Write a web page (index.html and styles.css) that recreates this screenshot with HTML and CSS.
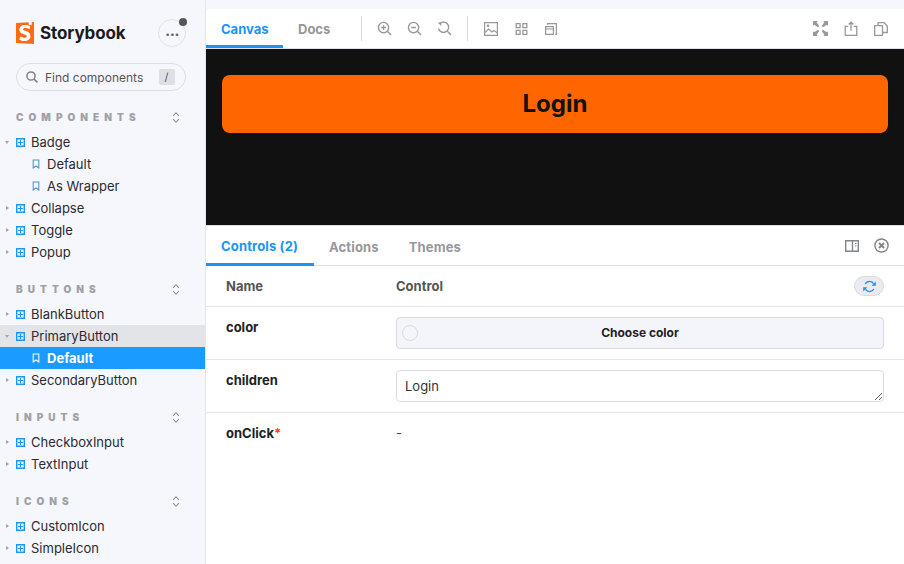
FILE: index.html
```html
<!DOCTYPE html>
<html lang="en">
<head>
  <meta charset="UTF-8">
  <title>Storybook</title>
  <link rel="stylesheet" href="styles.css">
</head>
<body>
  <svg class="sprites" width="0" height="0">
    <symbol id="component" viewBox="0 0 9 9">
      <path d="M.7.7h7.600v7.600H.7z" fill="none" stroke="currentColor" stroke-width="1.400"/>
      <path d="M4.500 2v5M2 4.500h5" fill="none" stroke="currentColor" stroke-width="1.200"/>
    </symbol>
    <symbol id="bookmark" viewBox="0 0 10 12">
      <path d="M1.500 1h7v10L5 8.500 1.500 11z" fill="none" stroke="currentColor" stroke-width="1.300"/>
    </symbol>
    <symbol id="updown" viewBox="0 0 10 16">
      <path d="M1.500 6 5 2l3.500 4M1.500 10 5 14l3.500-4" fill="none" stroke="currentColor" stroke-width="1.300"/>
    </symbol>
    <symbol id="search" viewBox="0 0 12 12">
      <circle cx="5" cy="5" r="4.100" fill="none" stroke="currentColor" stroke-width="1.500"/>
      <path d="M8 8l3.400 3.400" fill="none" stroke="currentColor" stroke-width="1.600"/>
    </symbol>
    <symbol id="zoomin" viewBox="0 0 16 16">
      <circle cx="7" cy="7" r="5.500" fill="none" stroke="currentColor" stroke-width="1.500"/>
      <path d="M11 11l4 4M4.500 7h5M7 4.500v5" fill="none" stroke="currentColor" stroke-width="1.500"/>
    </symbol>
    <symbol id="zoomout" viewBox="0 0 16 16">
      <circle cx="7" cy="7" r="5.500" fill="none" stroke="currentColor" stroke-width="1.500"/>
      <path d="M11 11l4 4M4.500 7h5" fill="none" stroke="currentColor" stroke-width="1.500"/>
    </symbol>
    <symbol id="zoomreset" viewBox="0 0 16 16">
      <path d="M3 2.800A5.500 5.500 0 1 1 1.600 8M11 11l4 4" fill="none" stroke="currentColor" stroke-width="1.500"/>
      <path d="M.8 1.500h3.700v3.700z" fill="currentColor"/>
    </symbol>
    <symbol id="image" viewBox="0 0 14 14">
      <path d="M.6.600h12.800v12.800H.6z" fill="none" stroke="currentColor" stroke-width="1.200"/>
      <path d="M1 10.500l3.500-3.500 3.500 3 2-1.500 3.500 2.500" fill="none" stroke="currentColor" stroke-width="1.100"/>
      <circle cx="4" cy="3.800" r="1.300" fill="currentColor"/>
    </symbol>
    <symbol id="grid" viewBox="0 0 12 12">
      <path d="M.7.700h3.900v3.900H.7zM7.400.700h3.900v3.900H7.400zM.7 7.400h3.900v3.900H.7zM7.400 7.400h3.900v3.900H7.400z" fill="none" stroke="currentColor" stroke-width="1.300"/>
    </symbol>
    <symbol id="outline" viewBox="0 0 12 12">
      <path d="M.6 3.600h7.800v7.800H.6zM2.500 1.800V.6h8.900v10.800h-1.200M.6 6h7.800" fill="none" stroke="currentColor" stroke-width="1.200"/>
    </symbol>
    <symbol id="fullscreen" viewBox="0 0 14 14">
      <path d="M0 0h4.500L3.400 1.100 5.800 4.700 4.700 5.800 1.100 3.400 0 4.500zM14 0v4.500l-1.100-1.100-3.600 2.400-1.100-1.100 2.400-3.600L9.500 0zM0 14V9.500l1.100 1.100 3.600-2.400 1.100 1.100-2.400 3.600L4.500 14zM14 14H9.500l1.100-1.100-2.400-3.600 1.100-1.100 3.600 2.400L14 9.500z" fill="currentColor"/>
    </symbol>
    <symbol id="share" viewBox="0 0 12 14">
      <path d="M3.500 5H.6v8.400h10.800V5H8.500M6 9V1M3.800 3.200 6 1l2.200 2.200" fill="none" stroke="currentColor" stroke-width="1.200"/>
    </symbol>
    <symbol id="copy" viewBox="0 0 14 14">
      <path d="M.7 3.700h7.800v9.600H.7zM4 3.400V.7h6l3.300 3.300v6.500H8.600" fill="none" stroke="currentColor" stroke-width="1.300"/>
    </symbol>
    <symbol id="panel" viewBox="0 0 14 12">
      <path d="M.7.700h12.600v10.600H.7zM7.500.700v10.600" fill="none" stroke="currentColor" stroke-width="1.400"/>
      <path d="M10 3h1.500v1H10zM10 5.500h1.500v1H10z" fill="currentColor"/>
    </symbol>
    <symbol id="close" viewBox="0 0 16 16">
      <circle cx="8" cy="8" r="7" fill="none" stroke="currentColor" stroke-width="1.500"/>
      <path d="M5.300 5.300l5.400 5.400M10.700 5.300l-5.400 5.400" fill="none" stroke="currentColor" stroke-width="2"/>
    </symbol>
    <symbol id="sync" viewBox="0 0 14 14">
      <path d="M2.300 4.300A5.300 5.300 0 0 1 11.300 3.800M11.700 9.700A5.300 5.300 0 0 1 2.700 10.200" fill="none" stroke="currentColor" stroke-width="1.500"/>
      <path d="M9.300 6.200h4.500V1.700zM4.700 7.800H.2v4.500z" fill="currentColor"/>
    </symbol>
  </svg>

  <div class="app">
    <!-- Sidebar -->
    <nav class="sidebar">
      <div class="brand">
        <div class="logo">
          <svg class="logoMark" viewBox="0 0 18 22">
            <path d="M0 1 18 0v22L0 21z" fill="#ff6a13"/>
            <path d="M12.800 0h2.800v3.600l-1.400-1-1.400 1z" fill="#fff"/>
            <path transform="translate(-3.200 -3.200) scale(1.350)" d="M12.500 7.800c-.8-.6-2-1-3.200-1-1.100 0-1.700.4-1.700 1 0 1.700 5.500.8 5.500 5 0 2.400-1.900 3.700-4.300 3.700-1.600 0-3.100-.5-4.100-1.400l1.200-2.200c.8.700 1.900 1.100 2.900 1.100 1 0 1.500-.4 1.500-1.100 0-1.800-5.500-.9-5.500-4.900 0-2.200 1.700-3.500 4.200-3.500 1.400 0 2.700.4 3.700 1z" fill="#fff"/>
          </svg>
          <span class="logoText">Storybook</span>
        </div>
        <button class="menuBtn"><span class="dots">•••</span><span class="menuDot"></span></button>
      </div>

      <div class="search">
        <svg class="searchIcon" width="12" height="12"><use href="#search"/></svg>
        <span>Find components</span>
        <kbd>/</kbd>
      </div>

      <section class="group">
        <h4>COMPONENTS <svg width="8" height="13"><use href="#updown"/></svg></h4>
        <a class="row open"><i class="caret"></i><svg class="cmp"><use href="#component"/></svg>Badge</a>
        <a class="row story"><svg class="bm"><use href="#bookmark"/></svg>Default</a>
        <a class="row story"><svg class="bm"><use href="#bookmark"/></svg>As Wrapper</a>
        <a class="row"><i class="caret"></i><svg class="cmp"><use href="#component"/></svg>Collapse</a>
        <a class="row"><i class="caret"></i><svg class="cmp"><use href="#component"/></svg>Toggle</a>
        <a class="row"><i class="caret"></i><svg class="cmp"><use href="#component"/></svg>Popup</a>
      </section>

      <section class="group">
        <h4>BUTTONS <svg width="8" height="13"><use href="#updown"/></svg></h4>
        <a class="row"><i class="caret"></i><svg class="cmp"><use href="#component"/></svg>BlankButton</a>
        <a class="row open hovered"><i class="caret"></i><svg class="cmp"><use href="#component"/></svg>PrimaryButton</a>
        <a class="row story selected"><svg class="bm"><use href="#bookmark"/></svg>Default</a>
        <a class="row"><i class="caret"></i><svg class="cmp"><use href="#component"/></svg>SecondaryButton</a>
      </section>

      <section class="group">
        <h4>INPUTS <svg width="8" height="13"><use href="#updown"/></svg></h4>
        <a class="row"><i class="caret"></i><svg class="cmp"><use href="#component"/></svg>CheckboxInput</a>
        <a class="row"><i class="caret"></i><svg class="cmp"><use href="#component"/></svg>TextInput</a>
      </section>

      <section class="group">
        <h4>ICONS <svg width="8" height="13"><use href="#updown"/></svg></h4>
        <a class="row"><i class="caret"></i><svg class="cmp"><use href="#component"/></svg>CustomIcon</a>
        <a class="row"><i class="caret"></i><svg class="cmp"><use href="#component"/></svg>SimpleIcon</a>
      </section>
    </nav>

    <!-- Preview and addons -->
    <main class="main">
      <header class="toolbar">
        <div class="tabs">
          <a class="tab active canvasTab">Canvas</a>
          <a class="tab docsTab">Docs</a>
        </div>
        <span class="divider firstDivider"></span>
        <div class="tools">
          <svg width="15" height="15"><use href="#zoomin"/></svg>
          <svg width="15" height="15"><use href="#zoomout"/></svg>
          <svg width="15" height="15"><use href="#zoomreset"/></svg>
        </div>
        <span class="divider"></span>
        <div class="tools tools2">
          <svg width="14" height="14"><use href="#image"/></svg>
          <svg width="13" height="12"><use href="#grid"/></svg>
          <svg width="12" height="12"><use href="#outline"/></svg>
        </div>
        <div class="tools right">
          <svg width="15" height="15"><use href="#fullscreen"/></svg>
          <svg width="14" height="15"><use href="#share"/></svg>
          <svg width="14" height="14"><use href="#copy"/></svg>
        </div>
      </header>

      <div class="canvas">
        <button class="loginBtn">Login</button>
      </div>

      <section class="panel">
        <div class="panelTabs">
          <a class="ptab active">Controls (2)</a>
          <a class="ptab">Actions</a>
          <a class="ptab">Themes</a>
          <div class="panelIcons">
            <svg width="14" height="12"><use href="#panel"/></svg>
            <svg width="15" height="15"><use href="#close"/></svg>
          </div>
        </div>

        <div class="argRow headRow">
          <div class="argName">Name</div>
          <div class="argControl">Control</div>
          <button class="resetBtn"><svg width="13" height="13"><use href="#sync"/></svg></button>
        </div>
        <div class="argRow">
          <div class="argName">color</div>
          <div class="argControl">
            <div class="colorBtn"><span class="swatch"></span>Choose color</div>
          </div>
        </div>
        <div class="argRow">
          <div class="argName">children</div>
          <div class="argControl">
            <textarea class="textBox" rows="1">Login</textarea>
          </div>
        </div>
        <div class="argRow lastRow">
          <div class="argName">onClick<span class="req">*</span></div>
          <div class="argControl dash">-</div>
        </div>
      </section>
    </main>
  </div>
</body>
</html>
```

FILE: styles.css
```css
/* General */
* {
  box-sizing: border-box;
}

body {
  margin: 0;
  font-family: Inter, 'Noto Sans', sans-serif;
  background: #f6f7fc;
  color: #222;
  overflow: hidden;
}

.sprites {
  position: absolute;
}

.app {
  display: flex;
  width: 904px;
  height: 564px;
  overflow: hidden;
}

/* Sidebar */
.sidebar {
  width: 206px;
  flex: none;
  border-right: 1px solid #e4e6ee;
  background: #f5f7fd;
}

.brand {
  display: flex;
  justify-content: space-between;
  align-items: center;
  height: 28px;
  margin-top: 19px;
  padding: 0 19px 0 16px;
}

.logo {
  display: flex;
  align-items: center;
  gap: 6px;
}

.logoMark {
  width: 18px;
  height: 22px;
}

.logoText {
  font-family: Inter, sans-serif;
  font-size: 17px;
  font-weight: 700;
  color: #1b1b1f;
  letter-spacing: -0.1px;
}

.menuBtn {
  position: relative;
  width: 28px;
  height: 28px;
  padding: 0;
  border: 1.5px solid #e0e2e8;
  border-radius: 50%;
  background: #f5f7fd;
  color: #666;
}

.dots {
  font-family: 'DejaVu Sans', sans-serif;
  font-size: 9px;
  letter-spacing: -0.6px;
  line-height: 1;
}

.menuDot {
  position: absolute;
  top: -2px;
  right: -2px;
  width: 8px;
  height: 8px;
  border-radius: 50%;
  background: #555;
}

.search {
  display: flex;
  align-items: center;
  height: 28px;
  margin: 16px 19px 0 16px;
  padding: 0 10.5px 0 9px;
  border: 1.5px solid #dcdee6;
  border-radius: 14px;
  font-size: 12px;
  color: #555;
}

.searchIcon {
  margin-right: 7px;
  color: #808186;
}

.search kbd {
  margin-left: auto;
  width: 16px;
  height: 16px;
  background: #dcdfe5;
  border-radius: 2px;
  font-family: Inter, sans-serif;
  font-size: 11px;
  line-height: 16px;
  text-align: center;
  color: #555;
}

.group {
  margin-bottom: 14px;
}

.group h4 {
  display: flex;
  justify-content: space-between;
  align-items: center;
  height: 22px;
  margin: 0 0 4px;
  padding: 2px 25px 0 16px;
  font-size: 10px;
  font-weight: 900;
  letter-spacing: 5.05px;
  color: #a0a1a7;
}

.group h4 svg {
  color: #8b8d93;
}

.search + .group {
  margin-top: 14px;
}

.row {
  display: flex;
  align-items: center;
  position: relative;
  height: 22px;
  padding-left: 16px;
  font-size: 13px;
  color: #2b2b30;
}

.caret {
  position: absolute;
  left: 6px;
  top: 8.5px;
  width: 0;
  height: 0;
  border-top: 2.5px solid transparent;
  border-bottom: 2.5px solid transparent;
  border-left: 3px solid #a2a2a6;
}

.open .caret {
  left: 5px;
  top: 10px;
  border-left: 2.5px solid transparent;
  border-right: 2.5px solid transparent;
  border-top: 3px solid #a2a2a6;
  border-bottom: 0;
}

.cmp {
  width: 9px;
  height: 9px;
  margin-right: 6px;
  color: #1d97f7;
}

.story {
  padding-left: 32px;
}

.bm {
  width: 8px;
  height: 10px;
  margin-right: 7px;
  color: #4a92cf;
}

.hovered {
  background: #e3e4e8;
}

.selected {
  background: #1a9bff;
  color: #fff;
  font-weight: 700;
}

.selected .bm {
  color: #fff;
}

/* Toolbar */
.main {
  flex: 1;
  min-width: 0;
  padding-top: 9px;
}

.toolbar {
  display: flex;
  align-items: center;
  height: 40px;
  background: #fff;
  border-bottom: 1px solid #dfe1e7;
  border-top-left-radius: 4px;
  color: #97989c;
}

.tabs {
  display: flex;
  align-self: stretch;
}

.tab {
  display: flex;
  align-items: center;
  height: 39px;
  font-size: 13px;
  font-weight: 700;
  color: #97979b;
}

.canvasTab {
  width: 77px;
  padding-left: 15px;
}

.docsTab {
  padding-left: 15px;
  width: 78px;
}

.tab.active {
  color: #1a94f5;
  border-bottom: 3px solid #1a94f5;
  padding-top: 3px;
}

.divider {
  width: 1px;
  height: 25px;
  background: #d8d9dd;
}

.firstDivider {
  margin-right: 15px;
}

.tools {
  display: flex;
  align-items: center;
  gap: 15px;
  margin-right: 15px;
}

.tools2 {
  margin-left: 16px;
  gap: 17px;
}

.tools.right {
  margin-left: auto;
  margin-right: 16px;
  gap: 16px;
}

/* Canvas */
.canvas {
  height: 176px;
  padding: 26px 16px 0;
  background: #111;
}

.loginBtn {
  display: block;
  width: 666px;
  height: 58px;
  border: none;
  border-radius: 8px;
  padding-bottom: 3px;
  background: #ff6600;
  font-family: Inter, sans-serif;
  font-size: 24px;
  font-weight: 700;
  color: #111;
}

/* Addon panel */
.panel {
  height: 339px;
  background: #fff;
  border-top: 1px solid #dfe1e7;
}

.panelTabs {
  display: flex;
  align-items: stretch;
  height: 40px;
  border-bottom: 1px solid #dfe1e7;
}

.ptab {
  display: flex;
  align-items: center;
  padding: 3px 15px 0;
  font-size: 13px;
  font-weight: 700;
  letter-spacing: 0.15px;
  color: #97979b;
}

.ptab.active {
  width: 108px;
  color: #1a94f5;
  border-bottom: 3px solid #1a94f5;
  margin-bottom: -1px;
}

.panelIcons {
  display: flex;
  align-items: center;
  gap: 15px;
  margin-left: auto;
  padding-right: 15px;
  color: #84858a;
}

.argRow {
  display: flex;
  position: relative;
  height: 53px;
  padding: 10px 20px 0;
  border-bottom: 1px solid #e5e6ea;
  font-size: 13px;
}

.headRow {
  height: 41px;
  padding-top: 12px;
  font-weight: 700;
  color: #555;
}

.lastRow {
  border-bottom: 0;
}

.argName {
  width: 170px;
  flex: none;
  padding-top: 2px;
  font-weight: 700;
}

.headRow .argName {
  padding-top: 0;
}

.argControl {
  flex: 1;
}

.req {
  color: #ff4400;
}

.dash {
  padding-top: 2px;
  color: #444;
}

.resetBtn {
  position: absolute;
  top: 10px;
  right: 20px;
  width: 30px;
  height: 20px;
  padding: 0;
  border: 1px solid #d9dbe3;
  border-radius: 10px;
  background: #e9ebf1;
  color: #1a94f5;
  display: flex;
  align-items: center;
  justify-content: center;
}

.colorBtn {
  display: flex;
  align-items: center;
  justify-content: center;
  position: relative;
  height: 32px;
  padding-bottom: 2px;
  border: 1px solid #d9dbe3;
  border-radius: 4px;
  background: #f3f5fb;
  font-size: 12px;
  font-weight: 700;
  color: #222;
}

.swatch {
  position: absolute;
  left: 5px;
  top: 7px;
  width: 16px;
  height: 16px;
  border: 1px solid #d9dbe0;
  border-radius: 50%;
}

.textBox {
  display: block;
  width: 100%;
  height: 32px;
  padding: 7px 8px;
  border: 1px solid #d9dbe3;
  border-radius: 4px;
  font-family: Inter, sans-serif;
  font-size: 13px;
  color: #333;
  outline: none;
}
```
